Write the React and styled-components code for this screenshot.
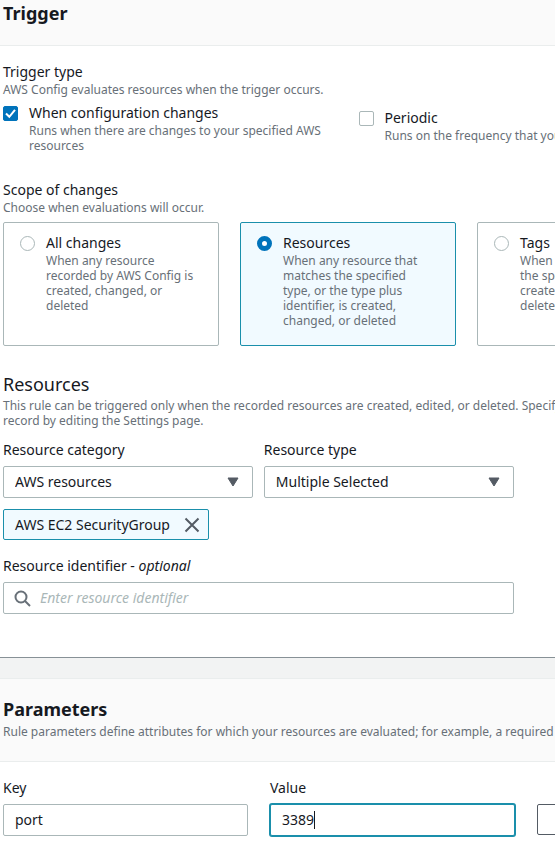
import React, { useState } from "react";
import styled, { createGlobalStyle, css } from "styled-components";

const color = {
  text: "#16191f",
  muted: "#687078",
  line: "#aab7b8",
  divider: "#eaeded",
  icon: "#545b64",
  teal: "#1a8fab",
  tint: "#f1faff",
  blue: "#0073bb",
};

const GlobalStyle = createGlobalStyle`
  *, *::before, *::after { box-sizing: border-box; }
  html { overflow: hidden; }
  body {
    margin: 0;
    background: #fff;
    color: ${color.text};
    font-family: "Noto Sans", "Open Sans", sans-serif;
    font-size: 14px;
    line-height: 20px;
  }
  h2, h3, p, fieldset, legend { margin: 0; padding: 0; border: 0; font-weight: 400; }
  input, select, button { font: inherit; color: inherit; }
`;

const Page = styled.main`
  overflow: hidden;
  background: #f2f3f3;
`;

const Panel = styled.section`
  background: #fff;

  & + & {
    margin-top: 20px;
    border-top: 1px solid ${color.divider};
  }
`;

const TriggerPanel = styled(Panel)`
  border-bottom: 1px solid #879196;
`;

const PanelHeader = styled.header`
  padding: ${(p) => (p.$roomy ? "19px 3px 22px" : "2px 3px 21px")};
  background: #fafafa;
  border-bottom: 1px solid ${color.divider};
`;

const PanelTitle = styled.h2`
  font-size: 18px;
  font-weight: 700;
  line-height: 22px;
`;

const PanelBody = styled.div`
  min-width: 696px;
  padding: 16px 3px ${(p) => (p.$last ? "14px" : "43px")};
`;

const Hint = styled.p`
  color: ${color.muted};
  font-size: 12px;
  line-height: 15px;
`;

const HeaderHint = styled(Hint)`
  margin-top: 4px;
  white-space: nowrap;
`;

const Group = styled.fieldset`
  min-width: 0;
  margin-bottom: ${(p) => p.$gap}px;
`;

const Legend = styled.legend`
  display: block;
`;

const CheckGrid = styled.div`
  display: grid;
  grid-template-columns: 1fr 1fr;
  gap: 21px;
  margin-top: 6px;
`;

const Choice = styled.label`
  display: flex;
  align-items: flex-start;
  gap: 11px;
  padding-top: ${(p) => (p.$lowered ? "5px" : "0")};
`;

const ChoiceText = styled.span`
  display: block;
  flex: 1;
  min-width: 0;
`;

const ChoiceHint = styled(Hint).attrs({ as: "span" })`
  display: block;
`;

const BoxFrame = styled.span`
  display: grid;
  flex: none;
  margin-top: 3px;

  & > * { grid-area: 1 / 1; }
  & > svg { pointer-events: none; }
`;

const CheckInput = styled.input`
  appearance: none;
  width: 15px;
  height: 15px;
  margin: 0;
  border: 1px solid ${color.line};
  border-radius: 2px;
  background: #fff;

  &:checked {
    border-color: ${color.blue};
    background: ${color.blue};
  }
`;

const RadioInput = styled.input`
  appearance: none;
  flex: none;
  width: 15px;
  height: 15px;
  margin: 3px 0 0;
  border: 1px solid ${color.line};
  border-radius: 50%;
  background: #fff;

  &:checked { border: 5px solid ${color.blue}; }
`;

const TileGrid = styled.div`
  display: grid;
  grid-template-columns: repeat(3, 1fr);
  gap: 21px;
  margin-top: 7px;
`;

const Tile = styled.label`
  display: flex;
  align-items: flex-start;
  gap: 11px;
  padding: 10px 20px 17px 16px;
  border: 1px solid ${(p) => (p.$selected ? color.teal : color.line)};
  border-radius: 2px;
  background: ${(p) => (p.$selected ? color.tint : "#fff")};
`;

const SubTitle = styled.h3`
  margin-bottom: 2px;
  font-size: 18px;
  line-height: 24px;
`;

const Fields = styled.div`
  width: 74%;
  margin-top: 12px;
`;

const SelectRow = styled.div`
  display: grid;
  grid-template-columns: 1fr 1fr;
  gap: 11px;
`;

const Field = styled.div`
  display: flex;
  flex-direction: column;
  gap: 6px;
`;

const control = css`
  width: 100%;
  height: 32px;
  border: 1px solid ${color.line};
  border-radius: 2px;
  background: #fff;
  outline: none;
`;

const SelectFrame = styled.div`
  display: grid;
  align-items: center;

  & > * { grid-area: 1 / 1; }
  & > svg { justify-self: end; margin-right: 14px; pointer-events: none; }
`;

const SelectInput = styled.select`
  ${control}
  appearance: none;
  padding: 0 36px 0 11px;
`;

const Token = styled.div`
  display: inline-flex;
  align-items: center;
  gap: 14px;
  height: 31px;
  margin: 11px 0 16px;
  padding: 0 8px 0 11px;
  border: 1px solid ${color.teal};
  border-radius: 2px;
  background: ${color.tint};
`;

const TokenRemove = styled.button`
  display: flex;
  padding: 0;
  border: 0;
  background: none;
`;

const SearchFrame = styled.div`
  display: grid;
  align-items: center;

  & > * { grid-area: 1 / 1; }
  & > svg { margin-left: 11px; pointer-events: none; }
`;

const SearchInput = styled.input`
  ${control}
  padding: 0 11px 2px 36px;

  &::placeholder { color: ${color.line}; font-style: italic; opacity: 1; }
`;

const ParameterRow = styled.div`
  display: grid;
  grid-template-columns: 245fr 245fr 156fr;
  align-items: end;
  gap: 22px;
`;

const TextInput = styled.input`
  ${control}
  padding: 0 11px 2px;

  &:focus {
    border-color: ${color.teal};
    box-shadow: 0 0 0 1px ${color.teal};
  }
`;

const NumberFrame = styled.div`
  position: relative;
  display: flex;
`;

const NumberInput = styled(TextInput)`
  caret-color: transparent;
`;

const InsertionBar = styled.span`
  position: absolute;
  top: 7px;
  width: 1px;
  height: 18px;
  background: ${color.text};
  pointer-events: none;
`;

const RemoveButton = styled.button`
  justify-self: start;
  height: 31px;
  margin-bottom: 1px;
  padding: 0 20px;
  border: 1px solid ${color.icon};
  border-radius: 2px;
  background: #fff;
  color: ${color.icon};
  font-weight: 700;
`;

const CheckMark = () => (
  <svg width="15" height="15" viewBox="0 0 15 15" fill="none" stroke="#fff" strokeWidth="2" aria-hidden="true">
    <path d="M3 7.5 6.3 10.8 12 3.8" />
  </svg>
);

const Caret = () => (
  <svg width="12" height="10" viewBox="0 0 12 10" fill={color.icon} stroke={color.icon} strokeLinejoin="round" aria-hidden="true">
    <path d="M1 1h10L6 9Z" />
  </svg>
);

const Cross = () => (
  <svg width="16" height="16" viewBox="0 0 16 16" fill="none" stroke={color.icon} strokeWidth="2" aria-hidden="true">
    <path d="m1.5 1.5 13 13M14.5 1.5l-13 13" />
  </svg>
);

const Magnifier = () => (
  <svg width="17" height="17" viewBox="0 0 17 17" fill="none" stroke={color.muted} strokeWidth="2" aria-hidden="true">
    <circle cx="7" cy="7" r="5.5" />
    <path d="m11 11 5 5" />
  </svg>
);

const SCOPES = [
  { id: "all", title: "All changes", hint: "When any resource recorded by AWS Config is created, changed, or deleted" },
  { id: "resources", title: "Resources", hint: "When any resource that matches the specified type, or the type plus identifier, is created, changed, or deleted" },
  { id: "tags", title: "Tags", hint: "When any resource with the specified tag is created, changed, or deleted" },
];

function CheckOption({ title, hint, checked, onChange, lowered }) {
  return (
    <Choice $lowered={lowered}>
      <BoxFrame>
        <CheckInput type="checkbox" checked={checked} onChange={(e) => onChange(e.target.checked)} />
        {checked && <CheckMark />}
      </BoxFrame>
      <ChoiceText>
        {title}
        <ChoiceHint>{hint}</ChoiceHint>
      </ChoiceText>
    </Choice>
  );
}

function SelectField({ id, label, options }) {
  return (
    <Field>
      <label htmlFor={id}>{label}</label>
      <SelectFrame>
        <SelectInput id={id}>
          {options.map((o) => (
            <option key={o}>{o}</option>
          ))}
        </SelectInput>
        <Caret />
      </SelectFrame>
    </Field>
  );
}

/* Digits all share one advance width, so the bar's place follows from their count. */
function NumberField({ id, label, initial }) {
  const [value, setValue] = useState(initial);
  const [end, setEnd] = useState(initial.length);
  const [focused, setFocused] = useState(true);

  return (
    <Field>
      <label htmlFor={id}>{label}</label>
      <NumberFrame>
        <NumberInput
          id={id}
          type="text"
          inputMode="numeric"
          autoFocus
          value={value}
          onChange={(e) => {
            setValue(e.target.value.replace(/\D/g, ""));
            setEnd(e.target.selectionEnd);
          }}
          onKeyUp={(e) => setEnd(e.target.selectionEnd)}
          onClick={(e) => setEnd(e.target.selectionEnd)}
          onFocus={() => setFocused(true)}
          onBlur={() => setFocused(false)}
        />
        {focused && <InsertionBar style={{ left: `calc(12px + ${end}ch)` }} />}
      </NumberFrame>
    </Field>
  );
}

export default function App() {
  const [onChange, setOnChange] = useState(true);
  const [periodic, setPeriodic] = useState(false);
  const [scope, setScope] = useState("resources");

  return (
    <Page>
      <GlobalStyle />
      <TriggerPanel>
        <PanelHeader>
          <PanelTitle>Trigger</PanelTitle>
        </PanelHeader>
        <PanelBody>
          <Group $gap={27}>
            <Legend>Trigger type</Legend>
            <Hint>AWS Config evaluates resources when the trigger occurs.</Hint>
            <CheckGrid>
              <CheckOption
                title="When configuration changes"
                hint="Runs when there are changes to your specified AWS resources"
                checked={onChange}
                onChange={setOnChange}
              />
              <CheckOption
                title="Periodic"
                hint="Runs on the frequency that you choose"
                checked={periodic}
                onChange={setPeriodic}
                lowered
              />
            </CheckGrid>
          </Group>

          <Group $gap={26}>
            <Legend>Scope of changes</Legend>
            <Hint>Choose when evaluations will occur.</Hint>
            <TileGrid>
              {SCOPES.map((s) => (
                <Tile key={s.id} $selected={scope === s.id}>
                  <RadioInput type="radio" name="scope" checked={scope === s.id} onChange={() => setScope(s.id)} />
                  <ChoiceText>
                    {s.title}
                    <ChoiceHint>{s.hint}</ChoiceHint>
                  </ChoiceText>
                </Tile>
              ))}
            </TileGrid>
          </Group>

          <SubTitle>Resources</SubTitle>
          <Hint>
            This rule can be triggered only when the recorded resources are created, edited, or deleted. Specify the
            resources to record by editing the Settings page.
          </Hint>

          <Fields>
            <SelectRow>
              <SelectField id="category" label="Resource category" options={["AWS resources"]} />
              <SelectField id="type" label="Resource type" options={["Multiple Selected"]} />
            </SelectRow>
            <Token>
              AWS EC2 SecurityGroup
              <TokenRemove type="button" aria-label="Remove AWS EC2 SecurityGroup">
                <Cross />
              </TokenRemove>
            </Token>
            <Field>
              <label htmlFor="identifier">
                Resource identifier - <em>optional</em>
              </label>
              <SearchFrame>
                <SearchInput id="identifier" type="text" placeholder="Enter resource identifier" />
                <Magnifier />
              </SearchFrame>
            </Field>
          </Fields>
        </PanelBody>
      </TriggerPanel>

      <Panel>
        <PanelHeader $roomy>
          <PanelTitle>Parameters</PanelTitle>
          <HeaderHint>
            Rule parameters define attributes for which your resources are evaluated; for example, a required tag or S3
            bucket.
          </HeaderHint>
        </PanelHeader>
        <PanelBody $last>
          <ParameterRow>
            <Field>
              <label htmlFor="key">Key</label>
              <TextInput id="key" type="text" defaultValue="port" />
            </Field>
            <NumberField id="value" label="Value" initial="3389" />
            <RemoveButton type="button">Remove</RemoveButton>
          </ParameterRow>
        </PanelBody>
      </Panel>
    </Page>
  );
}
